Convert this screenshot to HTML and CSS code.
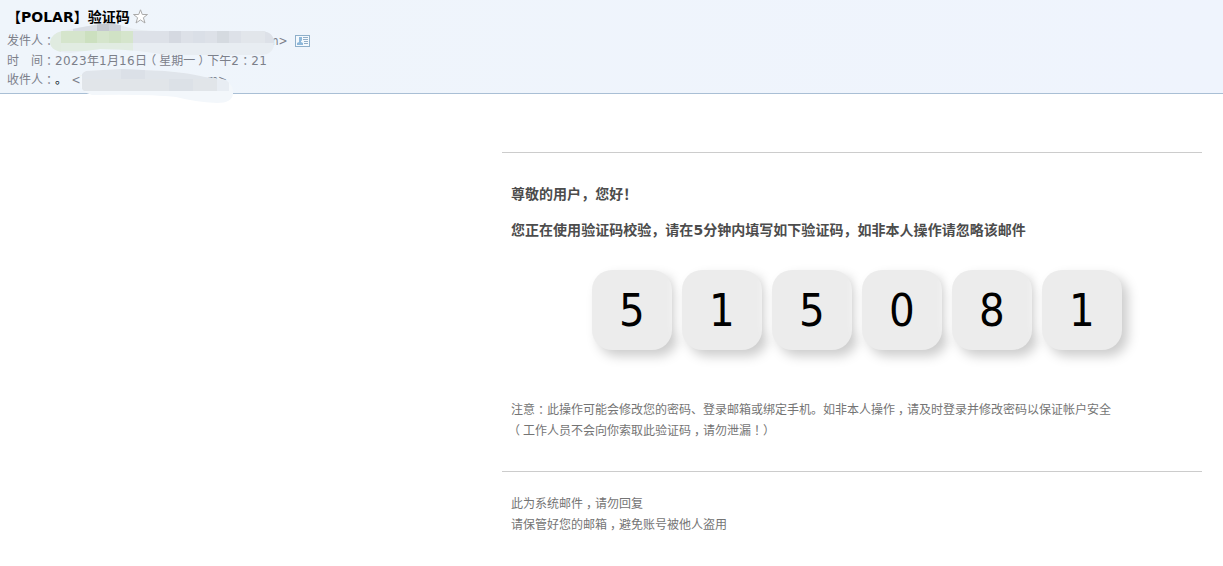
FILE: index.html
```html
<!DOCTYPE html>
<html lang="zh-CN">
<head>
    <meta charset="UTF-8">
    <meta name="viewport" content="width=device-width, initial-scale=1.0">
    <title>【POLAR】验证码</title>
    <link rel="stylesheet" href="styles.css">
</head>
<body>
    <div class="head">
        <h1 class="subject">【POLAR】验证码<svg class="star" width="15" height="15" viewBox="0 0 15 15"><path d="M7.5 .8 L9.3 5.5 H14.5 L10.4 8.7 L12 14 L7.5 10.9 L3 14 L4.6 8.7 L.5 5.5 H5.7 Z"/></svg></h1>
        <div class="row from">
            <span>发件人<span class="pc">：</span></span>
            <span class="tail">m&gt;</span>
            <svg class="card" width="15" height="12" viewBox="0 0 15 12">
                <rect class="frame" x=".5" y=".5" width="14" height="11"/>
                <path class="man" d="M4 2h3v3.5l-1 .5v1l2 1v2h-6V8l2-1V6z"/>
                <path class="lines" d="M8 2.5h5M8 4.5h5M9 6.5h4M9 8.5h4"/>
            </svg>
        </div>
        <div class="row">时　间<span class="pc">：</span><span class="num">2023</span>年<span class="num">1</span>月<span class="num">16</span>日<span class="pl">（</span>星期一<span class="pr">）</span>下午<span class="num">2</span><span class="pc">：</span><span class="num">21</span></div>
        <div class="row">收件人<span class="pc">：</span><span class="name">。</span> <span class="addr">&lt;2</span><span class="end">m&gt;</span></div>
        <!-- 地址打码 -->
        <svg class="mask" width="290" height="110" viewBox="0 0 290 110">
            <defs>
                <clipPath id="m1"><path d="M62 31 Q82 27 100 24 Q114 22 126 27 Q140 31 160 31 H262 Q274 32 274 43 Q274 54 262 55 H165 Q155 53 138 51 Q120 49 100 49 L70 53 Q50 52 50 42 Q51 34 62 31Z"/></clipPath>
                <clipPath id="m2"><path d="M86 71 L120 69 L165 71 Q190 73 205 77 L226 80 Q234 86 233 94 Q232 103 217 103 Q195 102 176 97 Q150 94 92 95 Q80 92 80 82 Q80 73 86 71Z"/></clipPath>
            </defs>
            <g clip-path="url(#m1)">
                <rect x="48" y="20" width="230" height="38" fill="#e8edf2"/>
                <rect x="48" y="31" width="13" height="24" fill="#e0ebe0"/>
                <rect x="61" y="31" width="72" height="12" fill="#d5e5cc"/>
                <rect x="61" y="43" width="72" height="8" fill="#e1ece2"/>
                <rect x="85" y="31" width="12" height="12" fill="#cce0bf"/>
                <rect x="109" y="31" width="12" height="12" fill="#d0e2c5"/>
                <rect x="73" y="20" width="24" height="11" fill="#d9dee5"/>
                <rect x="97" y="20" width="12" height="11" fill="#c4c8d0"/>
                <rect x="109" y="20" width="12" height="11" fill="#ced2da"/>
                <rect x="133" y="31" width="144" height="12" fill="#dde1e8"/>
                <rect x="169" y="31" width="12" height="12" fill="#d5d9e1"/>
                <rect x="193" y="31" width="12" height="12" fill="#dadfe7"/>
                <rect x="217" y="31" width="12" height="12" fill="#d5dae0"/>
                <rect x="241" y="31" width="24" height="12" fill="#e2e6eb"/>
            </g>
            <g clip-path="url(#m2)">
                <rect x="78" y="66" width="160" height="40" fill="#f3f7fb"/>
                <rect x="82" y="67" width="135" height="12" fill="#e0e5eb"/>
                <rect x="82" y="79" width="135" height="12" fill="#e1e5e9"/>
                <rect x="121" y="67" width="24" height="12" fill="#dbe0e7"/>
                <rect x="169" y="79" width="24" height="12" fill="#dce1e7"/>
                <rect x="217" y="79" width="12" height="12" fill="#e8edf3"/>
            </g>
        </svg>
    </div>
    <div class="mail">
        <div class="main">
            <p class="hello">尊敬的用户，您好！</p>
            <p class="hello">您正在使用验证码校验，请在5分钟内填写如下验证码，如非本人操作请忽略该邮件</p>
            <div class="code">
                <span>5</span>
                <span>1</span>
                <span>5</span>
                <span>0</span>
                <span>8</span>
                <span>1</span>
            </div>
            <p class="note">注意<span class="pc">：</span>此操作可能会修改您的密码、登录邮箱或绑定手机。如非本人操作<span class="pc">，</span>请及时登录并修改密码以保证帐户安全<br><span class="pl">（</span>工作人员不会向你索取此验证码<span class="pc">，</span>请勿泄漏<span class="pc">！</span>）</p>
        </div>
        <p class="note foot">此为系统邮件<span class="pc">，</span>请勿回复<br>请保管好您的邮箱<span class="pc">，</span>避免账号被他人盗用</p>
    </div>
</body>
</html>
```
FILE: styles.css
```css
*{margin: 0;padding: 0;box-sizing: border-box;}
body{font: 12px/20px "DejaVu Sans Condensed","DejaVu Sans","Noto Sans CJK SC",sans-serif;font-stretch: condensed;background: #fff;font-kerning: none;text-spacing-trim: space-all;}
.head{position: relative;height: 94px;padding: 7px 7px 0;background: linear-gradient(90deg,#eff5fb,#eff4fd);border-bottom: 1px solid #a9bfd5;}
.subject{display: flex;align-items: center;height: 20px;font-size: 14px;font-stretch: normal;font-family: "DejaVu Sans","Noto Sans CJK SC",sans-serif;color: #000;margin-bottom: 5px;}
.star{margin: -2px 0 0 3px;fill: #fff;stroke: #aaa;}
.row{height: 19.5px;line-height: 19.5px;color: #7c808a;white-space: pre;}
.from{display: flex;align-items: center;}
.tail{margin-left: 213px;}
.card{margin: -2px 0 0 7px;}
.frame{fill: #f4f9fd;stroke: #8eafca;}
.man{fill: #8eb8da;}
.lines{stroke: #91aec8;}
.num{font-family: "DejaVu Sans",sans-serif;font-stretch: normal;letter-spacing: .37px;}
.name{color: #012;}
.addr{margin-left: 1px;}
.end{margin-left: 120px;}
/* 标点居中 */
.pc,.pl,.pr{display: inline-block;width: 12px;text-indent: 3px;}
.pl{text-indent: -3px;}
.mask{position: absolute;left: 0;top: 0;}
.mail{width: 700px;margin: 58px 0 0 502px;border-top: 1px solid #ccc;}
.main{height: 319px;padding: 23px 9px 0;border-bottom: 1px solid #ccc;}
.hello{height: 36px;line-height: 36px;font-size: 14px;font-family: "DejaVu Sans","Noto Sans CJK SC",sans-serif;font-stretch: normal;font-weight: bold;color: #4c4c4c;white-space: nowrap;letter-spacing: .03px;}
.code{display: flex;gap: 10px;margin: 22px 0 50px 81px;}
.code span{width: 80px;height: 80px;line-height: 82px;border-radius: 20px;background: #ececec;box-shadow: 6px 6px 12px #ccc,-6px -6px 12px #fff;font-size: 45px;text-align: center;color: #000;}
.note{line-height: 21px;color: #747474;white-space: nowrap;}
.foot{padding: 22px 9px 0;}
```
